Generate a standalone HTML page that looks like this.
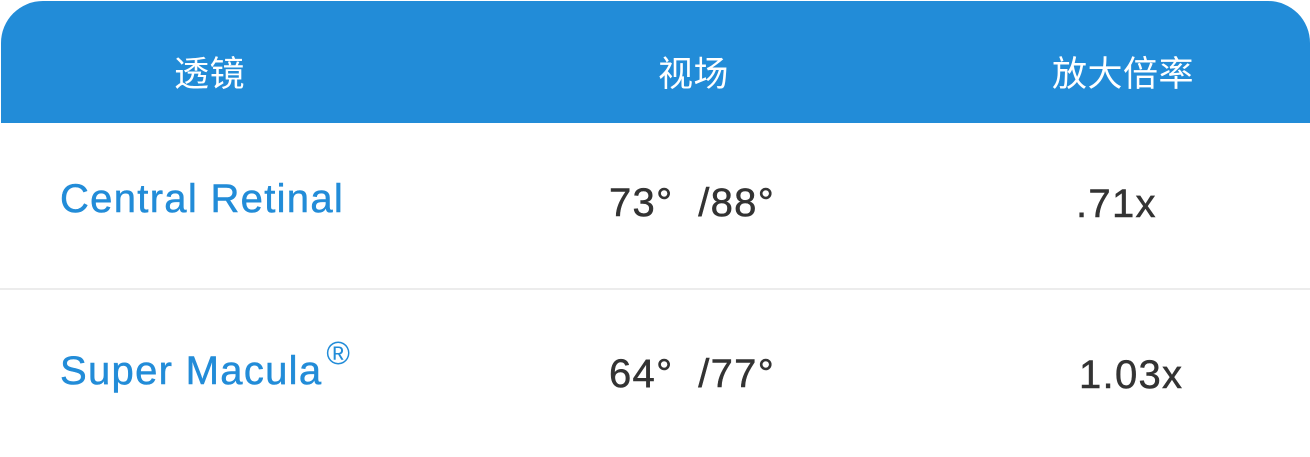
<!DOCTYPE html>
<html><head><meta charset="utf-8"><style>
body{margin:0;width:1310px;height:457px;background:#fff;position:relative;overflow:hidden;font-family:"Liberation Sans","Noto Sans CJK SC",sans-serif}
.hd{position:absolute;left:1px;top:1px;width:1309px;height:122px;background:#228cd8;border-radius:42px 42px 0 0}
.h{position:absolute;top:50px;color:#fff;font-size:35px;font-family:"Noto Sans CJK SC",sans-serif;line-height:44px;letter-spacing:0.5px}
.t{position:absolute;font-size:40px;line-height:44px;white-space:nowrap;-webkit-text-stroke:0.5px currentColor;letter-spacing:1.3px}
.b{color:#228cd8}
.d{color:#333}
.hr{position:absolute;left:0;top:288px;width:1310px;height:2px;background:#ececec}
</style></head><body>
<div class="hd"></div>
<div class="h" style="left:174px">透镜</div>
<div class="h" style="left:658px">视场</div>
<div class="h" style="left:1052px">放大倍率</div>
<div class="t b" style="left:60px;top:177px">Central Retinal</div>
<div class="t d" style="left:609px;top:181px">73°&nbsp;&nbsp;/88°</div>
<div class="t d" style="left:1076px;top:182px">.71x</div>
<div class="hr"></div>
<div class="t b" style="left:60px;top:349px">Super Macula<span style="font-size:32px;position:relative;top:-20px;margin-left:4px;-webkit-text-stroke:0">®</span></div>
<div class="t d" style="left:609px;top:352px">64°&nbsp;&nbsp;/77°</div>
<div class="t d" style="left:1079px;top:353px">1.03x</div>
</body></html>
